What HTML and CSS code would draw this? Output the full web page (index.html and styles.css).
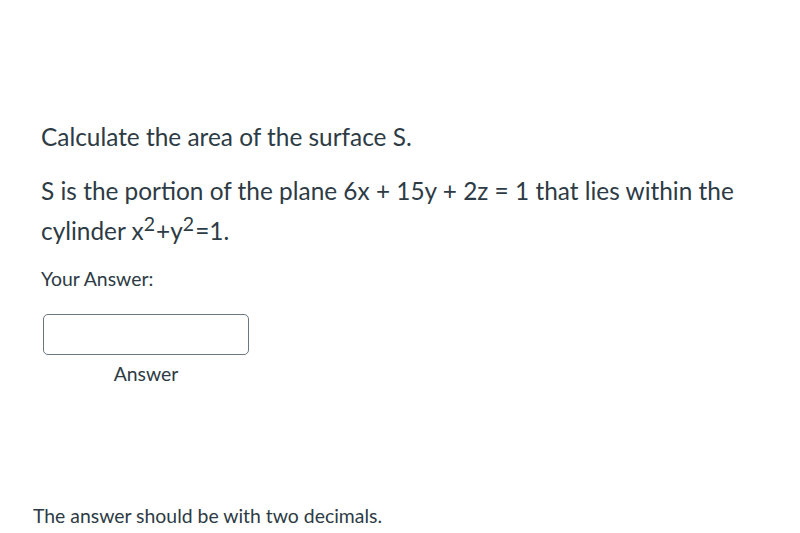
FILE: index.html
```html
<!DOCTYPE html>
<html>
<head>
<meta charset="utf-8">
<link rel="stylesheet" href="styles.css">
</head>
<body>
<div class="page">
  <div class="question">
    <p class="q-line q-first">Calculate the area of the surface S.</p>
    <p class="q-line q-second">S is the portion of the plane 6x + 15y + 2z = 1 that lies within the cylinder x<sup>2</sup>+y<sup>2</sup>=1.</p>
    <p class="label">Your Answer:</p>
    <div class="answer-block">
      <div class="answer-input"></div>
      <div class="answer-caption">Answer</div>
    </div>
  </div>
  <p class="note">The answer should be with two decimals.</p>
</div>
</body>
</html>
```
FILE: styles.css
```css
html, body {
  margin: 0;
  padding: 0;
  background: #ffffff;
}
body {
  font-family: "Lato", "Liberation Sans", sans-serif;
  color: #2d3b45;
}
.page {
  width: 800px;
  height: 533px;
  padding-top: 117px;
  box-sizing: border-box;
  overflow: hidden;
}
.question {
  padding-left: 41px;
  width: 720px;
}
.q-line {
  margin: 0;
  font-size: 24.4px;
  line-height: 40px;
}
.q-second {
  margin-top: 14px;
}
.q-line sup {
  font-size: 0.8em;
  line-height: 0;
  vertical-align: 0.48em;
  padding: 0 1px 0 0;
}
.label {
  margin: 16px 0 0 0;
  font-size: 19.4px;
  line-height: 24px;
}
.answer-block {
  margin-top: 23px;
  width: 206px;
  margin-left: 2px;
}
.answer-input {
  height: 41px;
  box-sizing: border-box;
  border: 1px solid #6b7780;
  border-radius: 5px;
  background: #fff;
}
.answer-caption {
  text-align: center;
  font-size: 19.4px;
  line-height: 24px;
  margin-top: 7px;
}
.note {
  margin: 118px 0 0 33px;
  font-size: 19.4px;
  line-height: 24px;
}
```
